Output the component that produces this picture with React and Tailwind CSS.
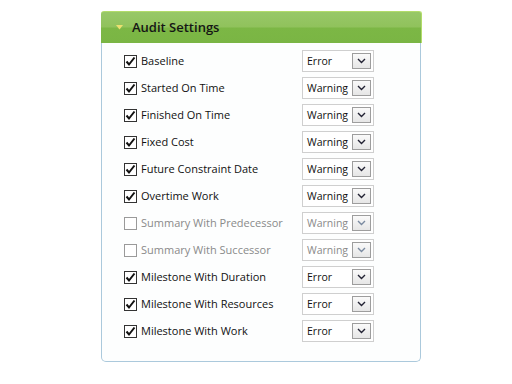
import React from "react";

const rows = [
  { label: "Baseline", value: "Error", checked: true },
  { label: "Started On Time", value: "Warning", checked: true },
  { label: "Finished On Time", value: "Warning", checked: true },
  { label: "Fixed Cost", value: "Warning", checked: true },
  { label: "Future Constraint Date", value: "Warning", checked: true },
  { label: "Overtime Work", value: "Warning", checked: true },
  { label: "Summary With Predecessor", value: "Warning", checked: false, disabled: true },
  { label: "Summary With Successor", value: "Warning", checked: false, disabled: true },
  { label: "Milestone With Duration", value: "Error", checked: true },
  { label: "Milestone With Resources", value: "Error", checked: true },
  { label: "Milestone With Work", value: "Error", checked: true },
];

function Check({ checked, disabled }) {
  return (
    <div
      className={
        "w-[13px] h-[13px] bg-white border flex items-center justify-center " +
        (disabled ? "border-[#9a9a9a]" : "border-[#333]")
      }
    >
      {checked && (
        <svg width="11" height="11" viewBox="0 0 11 11">
          <path d="M1.5 5.5 L4 8.5 L9.5 1.5" fill="none" stroke="#111" strokeWidth="2" />
        </svg>
      )}
    </div>
  );
}

function Select({ value, disabled }) {
  return (
    <div className="w-[72px] h-[22px] border border-[#cfcfcf] bg-white flex items-center pl-[4px] pr-[2px]">
      <span
        className={"flex-1 text-[10.5px] leading-none " + (disabled ? "text-[#8a8a8a]" : "text-[#111]")}
        style={{ fontFamily: "'Open Sans', sans-serif" }}
      >
        {value}
      </span>
      <div className="w-[19px] h-[16px] border border-[#9d9d9d] bg-gradient-to-b from-[#fafafa] to-[#e6e6e6] flex items-center justify-center">
        <svg width="9" height="6" viewBox="0 0 9 6">
          <path d="M1 1 L4.5 4.5 L8 1" fill="none" stroke={disabled ? "#7a8aa0" : "#223"} strokeWidth="1.4" />
        </svg>
      </div>
    </div>
  );
}

export default function App() {
  return (
    <div className="w-[512px] h-[384px] bg-white relative" style={{ fontFamily: "'Open Sans', sans-serif" }}>
      <div className="pt-[11px] pl-[101px]">
        <div className="w-[321px]">
          <div className="h-[32px] rounded-t-[3px] border-t border-r border-[#b2dc6a] bg-[linear-gradient(to_bottom,#98c868_0%,#90c25c_48%,#7cb745_52%,#7ab544_100%)] flex items-center pl-[15px]">
            <svg width="7" height="5" viewBox="0 0 7 5" className="mr-[9px]">
              <path d="M0 0 L7 0 L3.5 4.5 Z" fill="#ece070" />
            </svg>
            <span className="text-[13px] font-semibold text-[#151515]">Audit Settings</span>
          </div>
          <div className="w-[320px] border-l border-r border-b border-[#abc9dc] rounded-b-[5px] bg-[#fdfefe] pt-[7px] pb-[19px] pl-[22px] flex flex-col gap-[5px]">
            {rows.map((r) => (
              <div key={r.label} className="flex items-center h-[22px]">
                <div className="w-[178px] flex items-center">
                  <Check checked={r.checked} disabled={r.disabled} />
                  <span className={"ml-[4px] text-[11px] " + (r.disabled ? "text-[#8a8a8a]" : "text-[#111]")}>
                    {r.label}
                  </span>
                </div>
                <Select value={r.value} disabled={r.disabled} />
              </div>
            ))}
          </div>
        </div>
      </div>
    </div>
  );
}
